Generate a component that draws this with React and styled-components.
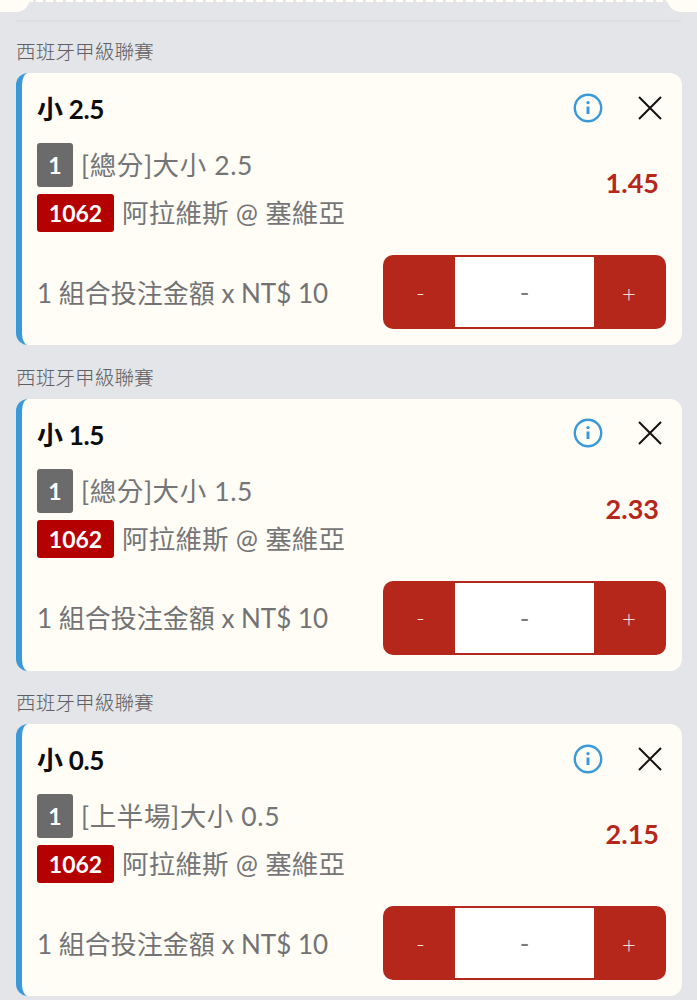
import React from "react";
import styled, { createGlobalStyle } from "styled-components";

const Global = createGlobalStyle`
  html, body { margin: 0; padding: 0; background: #e3e5e8; }
  body { font-family: Lato, "Noto Sans CJK TC", sans-serif; }
`;

const Page = styled.div`
  width: 697px;
  height: 1000px;
  overflow: hidden;
  background: #e3e5e8;
`;

const TopBand = styled.div`
  position: relative;
  box-sizing: border-box;
  height: 21px;
  margin: 0 16px;
  border-bottom: 1px solid #dbdde0;
  box-shadow: 0 1px 2px rgba(0, 0, 0, 0.03);
  background: repeating-linear-gradient(90deg, #fffdf5 0 7px, transparent 7px 10px) top left / 100% 2px no-repeat;
`;

const Corner = styled.span`
  position: absolute;
  top: -12px;
  ${(p) => (p.$right ? "right: -30px;" : "left: -30px;")}
  width: 44px;
  height: 24px;
  border-radius: 0 0 14px 14px;
  background: #fffdf5;
`;

const List = styled.div`
  padding: 0 15px 0 16px;
`;

const Section = styled.section`
  height: 325.5px;
`;

const League = styled.div`
  height: 52px;
  padding-top: 18px;
  box-sizing: border-box;
  font-size: 19.7px;
  line-height: 26px;
  font-weight: 300;
  color: #5f6063;
  white-space: nowrap;
`;

const Card = styled.article`
  box-sizing: border-box;
  height: 272px;
  border-left: 6px solid #3a9ad9;
  border-radius: 12px;
  background: #fffdf5;
  padding: 16px 16px 16px 15px;
  display: flex;
  flex-direction: column;
`;

const TitleRow = styled.div`
  display: flex;
  align-items: center;
  height: 37px;
  margin-right: 3px;
`;

const Title = styled.h3`
  flex: 1;
  margin: 0;
  font-size: 26px;
  font-weight: 700;
  color: #0c0c0c;
  letter-spacing: -0.3px;
`;

const InfoButton = styled.svg`
  width: 30px;
  height: 30px;
  margin-right: 34px;
`;

const CloseButton = styled.svg`
  width: 26px;
  height: 26px;
`;

const MainRow = styled.div`
  display: flex;
  align-items: center;
  margin-top: 17px;
`;

const Details = styled.div`
  flex: 1;
  display: flex;
  flex-direction: column;
  gap: 7px;
`;

const DetailLine = styled.div`
  display: flex;
  align-items: center;
  gap: 8px;
  font-size: 26.5px;
  line-height: 38px;
  color: #757577;
  white-space: nowrap;
`;

const Market = styled.span`
  letter-spacing: 0.6px;
`;

const Teams = styled.span`
  letter-spacing: 0.2px;
`;

const Tag = styled.span`
  box-sizing: border-box;
  height: ${(p) => (p.$red ? "38px" : "44px")};
  width: ${(p) => (p.$red ? "77px" : "36px")};
  display: flex;
  align-items: center;
  justify-content: center;
  border-radius: 3px;
  background: ${(p) => (p.$red ? "#b50000" : "#6b6b6b")};
  color: #fff;
  font-size: 23px;
  font-weight: 700;
`;

const Odds = styled.div`
  color: #b5271b;
  font-size: 27px;
  font-weight: 700;
  margin-right: 7px;
  margin-bottom: 10px;
`;

const BetRow = styled.div`
  display: flex;
  align-items: center;
  justify-content: space-between;
  margin-top: 23px;
`;

const BetText = styled.div`
  font-size: 26px;
  color: #727274;
  margin-top: -2px;
  white-space: nowrap;
`;

const Stepper = styled.div`
  box-sizing: border-box;
  width: 283px;
  height: 74px;
  display: flex;
  border-radius: 10px;
  background: #b5271b;
  overflow: hidden;
  padding: 2px 0;
`;

const StepButton = styled.button`
  border: 0;
  padding: 0 ${(p) => (p.$plus ? "2px" : "0")} 0 ${(p) => (p.$plus ? "0" : "3px")};
  width: 72px;
  background: transparent;
  color: #f6dfdb;
  font-family: inherit;
  font-size: 24px;
  font-weight: 300;
`;

const StepValue = styled.div`
  flex: 1;
  background: #fff;
  color: #7b7b7b;
  font-size: 26px;
  display: flex;
  align-items: center;
  justify-content: center;
`;

const bets = [
  { title: "小 2.5", market: "[總分]大小 2.5", odds: "1.45" },
  { title: "小 1.5", market: "[總分]大小 1.5", odds: "2.33" },
  { title: "小 0.5", market: "[上半場]大小 0.5", odds: "2.15" },
];

function Bet({ title, market, odds }) {
  return (
    <Section>
      <League>西班牙甲級聯賽</League>
      <Card>
        <TitleRow>
          <Title>{title}</Title>
          <InfoButton viewBox="0 0 30 30" fill="none" stroke="#3a9ad9">
            <circle cx="15" cy="15" r="13.2" strokeWidth="2.4" />
            <circle cx="15" cy="9.6" r="1.7" fill="#3a9ad9" stroke="none" />
            <path d="M15 13.5v7.5" strokeWidth="3" />
          </InfoButton>
          <CloseButton viewBox="0 0 26 26" fill="none" stroke="#111" strokeWidth="2">
            <path d="M2 2l22 22M24 2L2 24" />
          </CloseButton>
        </TitleRow>
        <MainRow>
          <Details>
            <DetailLine>
              <Tag>1</Tag>
              <Market>{market}</Market>
            </DetailLine>
            <DetailLine>
              <Tag $red>1062</Tag>
              <Teams>阿拉維斯 @ 塞維亞</Teams>
            </DetailLine>
          </Details>
          <Odds>{odds}</Odds>
        </MainRow>
        <BetRow>
          <BetText>1 組合投注金額 x NT$ 10</BetText>
          <Stepper>
            <StepButton>-</StepButton>
            <StepValue>-</StepValue>
            <StepButton $plus>+</StepButton>
          </Stepper>
        </BetRow>
      </Card>
    </Section>
  );
}

export default function App() {
  return (
    <Page>
      <Global />
      <TopBand>
        <Corner />
        <Corner $right />
      </TopBand>
      <List>
        {bets.map((b) => (
          <Bet key={b.title} {...b} />
        ))}
      </List>
    </Page>
  );
}
